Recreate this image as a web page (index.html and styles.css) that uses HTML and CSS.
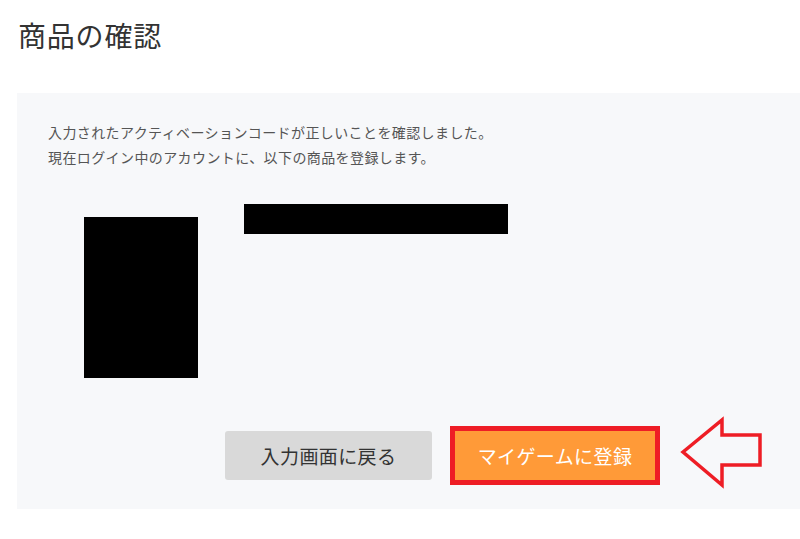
FILE: index.html
```html
<!DOCTYPE html>
<html lang="ja">
<head>
<meta charset="utf-8">
<title>商品の確認</title>
<link rel="stylesheet" href="styles.css">
</head>
<body>
<h1 class="title">商品の確認</h1>
<section class="panel">
  <p class="msg">入力されたアクティベーションコードが正しいことを確認しました。<br>現在ログイン中のアカウントに、以下の商品を登録します。</p>
  <div class="product">
    <div class="thumb"></div>
    <div class="name"></div>
  </div>
  <div class="actions">
    <button class="btn back">入力画面に戻る</button>
    <button class="btn register">マイゲームに登録</button>
  </div>
</section>
<svg class="arrow" width="90" height="76" viewBox="0 0 90 76">
  <polygon points="5,37 44,5 44,20 82,20 82,50 44,50 44,70" fill="none" stroke="#ee1d25" stroke-width="3.5" stroke-linejoin="miter"/>
</svg>
</body>
</html>
```

FILE: styles.css
```css
html, body {
  margin: 0;
  padding: 0;
  background: #ffffff;
  font-family: "Noto Sans CJK JP", "Noto Sans", sans-serif;
}
body {
  position: relative;
  width: 800px;
  height: 539px;
  overflow: hidden;
}
.title {
  margin: 0;
  padding: 15px 0 0 18px;
  font-size: 28px;
  line-height: 40px;
  font-weight: 400;
  letter-spacing: 0.8px;
  color: #333333;
}
.panel {
  margin: 38px 0 0 17px;
  background: #f7f8fa;
  padding: 27px 0 29px 31px;
}
.msg {
  margin: 0;
  font-size: 14px;
  line-height: 25px;
  letter-spacing: 0.4px;
  color: #555555;
}
.product {
  display: flex;
  align-items: flex-start;
  gap: 46px;
  margin-top: 34px;
  padding-left: 36px;
  height: 174px;
}
.thumb {
  width: 114px;
  height: 161px;
  margin-top: 13px;
  background: #000000;
}
.name {
  width: 264px;
  height: 30px;
  background: #000000;
}
.actions {
  display: flex;
  gap: 23px;
  margin-top: 53px;
  padding-left: 177px;
}
.btn {
  height: 49px;
  border: none;
  font-family: inherit;
  font-size: 19px;
  letter-spacing: 0.4px;
  padding: 0;
  cursor: pointer;
}
.back {
  width: 207px;
  background: #d9d9d9;
  color: #333333;
  border-radius: 3px;
}
.register {
  width: 200px;
  background: #ff9a38;
  color: #ffffff;
  outline: 5px solid #ee1d25;
}
.arrow {
  position: absolute;
  left: 678px;
  top: 415px;
}
```
